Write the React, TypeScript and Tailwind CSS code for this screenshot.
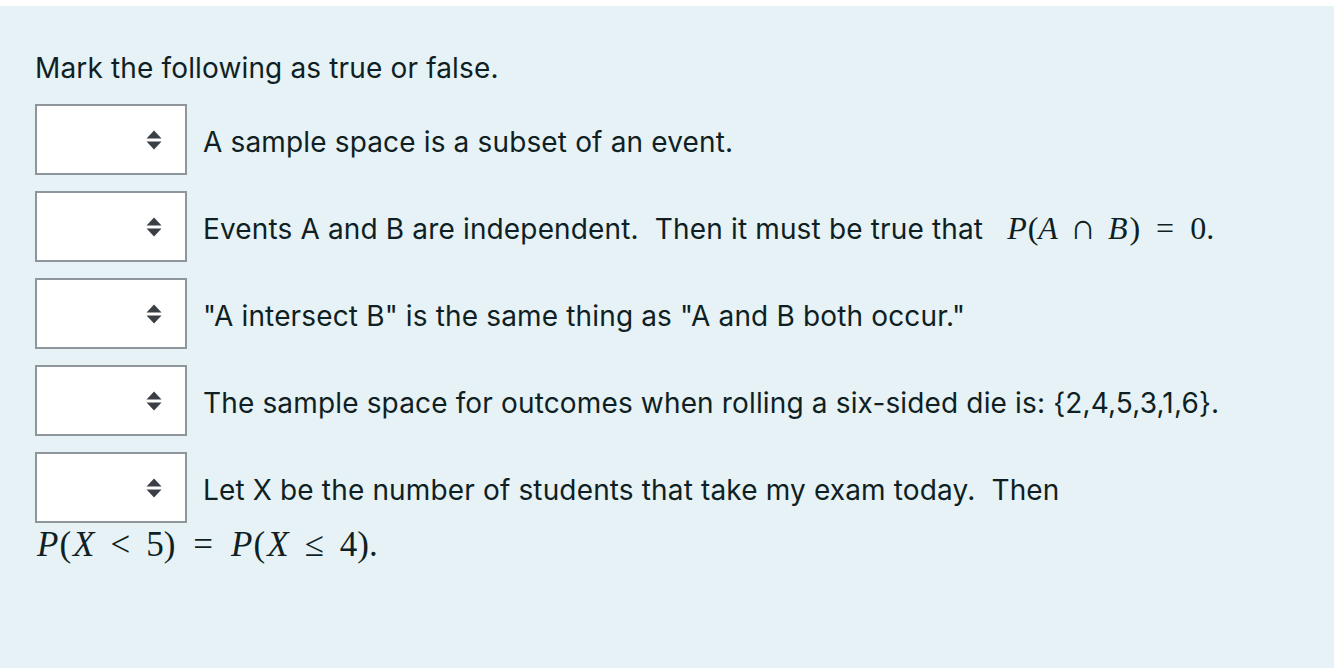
import React from "react";

function Dropdown() {
  return (
    <span className="inline-flex align-[2px] items-center justify-end w-[152px] h-[71px] border-2 border-[#8f959d] bg-white pr-[23px] mr-[16px]">
      <svg width="16" height="20" viewBox="0 0 16 20" className="block">
        <path d="M8 0.5 L15.5 8.5 L0.5 8.5 Z" fill="#3a3f45" />
        <path d="M0.5 11.5 L15.5 11.5 L8 19.5 Z" fill="#3a3f45" />
      </svg>
    </span>
  );
}

const serif = { fontFamily: '"Liberation Serif", "Times New Roman", "DejaVu Serif", serif' };

export default function App() {
  return (
    <div className="min-h-screen bg-white pt-[6px]">
      <div
        className="h-[662px] bg-[#e6f2f5] px-[35px] pt-[43px] text-[28px] leading-[39px] tracking-[0.15px] text-[#0f1f24]"
        style={{ fontFamily: 'Inter, "Liberation Sans", Arial, sans-serif' }}
      >
        <p className="mb-[16px]">Mark the following as true or false.</p>

        <div className="mb-[16px]">
          <Dropdown />A sample space is a subset of an event.
        </div>

        <div className="mb-[16px]">
          <Dropdown />
          Events A and B are independent.&nbsp; Then it must be true that{" "}
          <span className="text-[32px] leading-none tracking-normal whitespace-nowrap ml-[16px]" style={serif}>
            <i>P</i>
            <span className="ml-[1px]">(</span>
            <i>A</i>
            <span className="mx-[12px] text-[36px]">∩</span>
            <i>B</i>
            <span className="ml-[2px]">)</span>
            <span className="mx-[16px]">=</span>0.
          </span>
        </div>

        <div className="mb-[16px]">
          <Dropdown />
          "A intersect B" is the same thing as "A and B both occur."
        </div>

        <div className="mb-[16px]">
          <Dropdown />
          The sample space for outcomes when rolling a six-sided die is: {"{2,4,5,3,1,6}"}.
        </div>

        <div>
          <Dropdown />
          Let X be the number of students that take my exam today.&nbsp; Then{" "}
          <br />
          <span className="text-[35px] leading-[44px] tracking-normal whitespace-nowrap ml-[2px]" style={serif}>
            <i>P</i>
            <span className="ml-[1px]">(</span>
            <i className="ml-[2px]">X</i>
            <span className="mx-[16px]">&lt;</span>5
            <span>)</span>
            <span className="mx-[18px]">=</span>
            <i>P</i>
            <span className="ml-[1px]">(</span>
            <i className="ml-[2px]">X</i>
            <span className="mx-[16px]">≤</span>4
            <span>)</span>.
          </span>
        </div>
      </div>
    </div>
  );
}
